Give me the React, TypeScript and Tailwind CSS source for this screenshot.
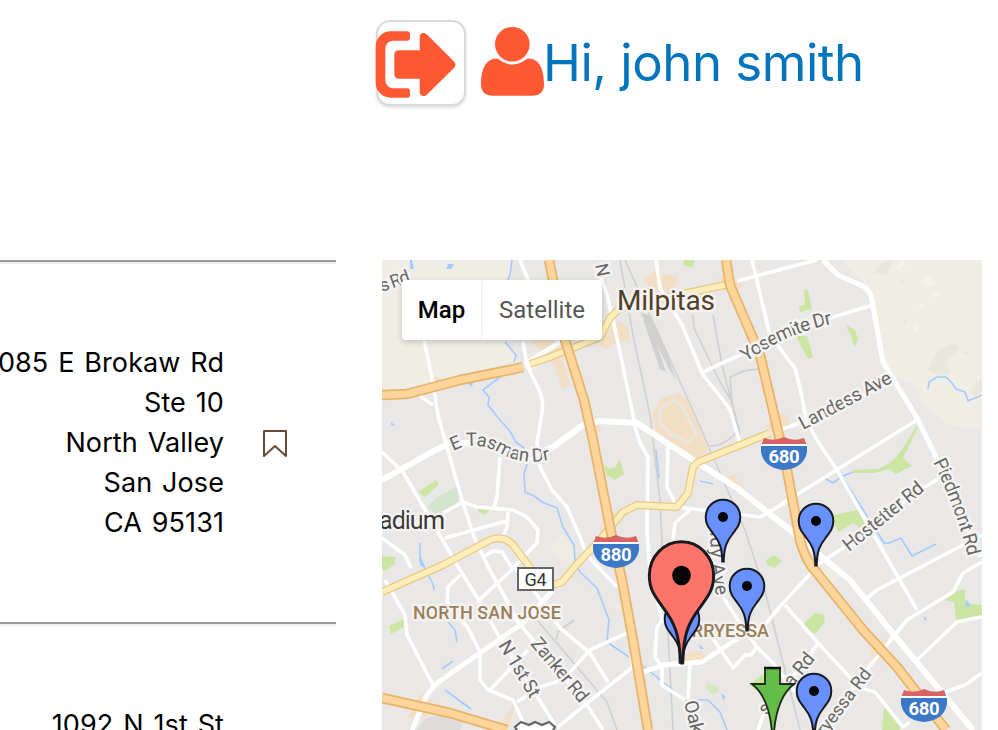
import React from "react";

const gray = [
  "M620 260L633 335L650 415L660 500L662 543L667 613L673 730",
  "M625 260L653 322L695 415L723 480L745 530L757 567L763 583L800 730",
  "M693 315L694 328L719 380L732 402L740 435",
  "M713 315L722 365L735 415L739 430Q725 446 710 446",
  "M732 402L730 377L744 371L758 369",
  "M537 620L607 702L617 730M556 640L558 632L574 620",
];

const minorRoads = [
  "M420 396L433 405M423 335L432 378L438 415L447 447L463 503L475 540L490 570",
  "M520 260L530 285M523 342L527 365L540 392Q544 403 542 412L537 443L540 467L552 490L567 507L580 537L587 555L617 587",
  "M382 452L403 472L460 570L480 602L498 635L538 698L555 725",
  "M443 513L463 502L477 507L513 510L527 517L538 530L537 543L513 568",
  "M500 457L497 497L494 508M508 512L507 527L503 537M445 538L503 522L507 522",
  "M483 557L493 551L502 552L512 568M382 538L405 555L411 568",
  "M385 580L405 615L407 635L433 685",
  "M460 575L448 587L447 602L468 628L480 652L480 680L488 690L513 700L523 722",
  "M517 565L477 602M487 565L500 588L518 622L587 705L603 730",
  "M513 565L537 595L560 628L590 653L608 682M490 690L528 650",
  "M627 633L590 650L563 680L540 687L517 702M557 728L587 703L633 667L631 655",
  "M598 270L607 295L617 338L633 415L635 427L640 443L648 457L647 533L650 570L662 620L657 627L655 657L662 667L662 685L685 700",
  "M656 260L660 288L682 325L703 375L723 400L730 410L740 443",
  "M703 372L740 355L830 318L873 305M737 281L790 267L817 260",
  "M752 260L762 302L770 335L790 362L795 368L800 388L807 422L817 440L837 470L867 523L917 610",
  "M780 430L800 423L893 382M780 505L917 420",
  "M763 627L783 603L820 563L843 548L923 488L940 478",
  "M867 598L877 590L982 535M982 562L963 573L953 592L907 620L893 637L877 657L820 730",
  "M982 617L957 622L917 660M982 673L965 685L945 692",
  "M785 605L818 643L860 688L875 692L903 727L910 722M818 643L807 660L765 710L758 730",
  "M723 597L740 623L757 647L773 663L795 692M712 637L733 668L745 655L751 655L757 647",
  "M690 663L688 700M668 447L667 487L677 507L760 517L790 500",
  "M690 510L675 523L673 540",
];

const arterials = [
  "M382 480L400 470L430 453L450 443L490 443L530 457L553 447L583 425L600 421L637 423L667 443L737 488L790 530L823 558L850 580L890 630L973 730",
  "M412 730L427 695L437 683L480 653L523 623L553 590",
  "M643 672L663 665L690 663L702 662L740 637L763 625",
  "M823 260L838 275L865 287L871 295L883 362L917 418L935 455L980 557",
  "M525 364L560 342M527 368L556 356",
];

const yellow = [
  "M530 364L550 357L580 345L600 337L610 318L620 308L687 293L730 284",
  "M382 592L443 565L490 540Q504 535 513 545L531 569",
  "M548 586L562 582L578 563L600 540L623 512L637 505L677 507L688 493L693 467L698 462L770 433",
];

const highways = [
  "M549 260L565 340L584 400L593 440L612 537L622 580L633 640L648 730",
  "M726 260L730 285L760 355L773 410L787 470L800 540Q806 562 817 573L863 630L897 667L946 730",
  "M382 395L407 394L460 380L510 370L523 367",
  "M382 698L450 713L507 730",
];

const water = [
  "M512 260L510 275L506 284M505 342L516 355L514 362M500 377L483 390L489 397L488 405L500 420L509 430L516 442L524 448L528 460L524 475L525 492L534 496L542 502L557 508L563 527L574 545L575 562L580 572L597 588L609 620L607 642L629 657",
  "M420 543L420 562L424 567L433 584L434 590M448 622L455 630L457 642M453 661L442 669M445 690L471 709",
  "M928 389L929 382L937 377L946 377L952 383L956 389L965 392L968 401L982 395",
  "M826 479L833 483L841 477L853 472M843 478L884 543L889 543L901 538L912 556L936 544",
  "M643 666L685 700L708 700L720 712L727 730M656 450L659 478M700 481L713 484",
];

const parks = [
  "M418 492L436 480L439 484L425 497Z",
  "M477 506L491 508L485 515L479 512Z",
  "M382 556L395 557V564L387 570H382Z",
  "M389 626L404 619V627L391 634Z",
  "M604 464L609 469L615 467L620 459L624 474L615 480L606 475Z",
  "M766 560L774 555L782 561L775 568L767 565Z",
  "M804 290L808 290L812 309L800 312L799 307L805 304Z",
  "M796 336H807L813 357L808 359Z",
  "M846 324L855 330L858 339L855 347Z",
  "M853 470L878 469L890 463L898 455Q907 443 916 426L918 427L903 458L912 466L896 474L889 469L875 473H853Z",
  "M834 515L858 510L866 524L860 528L853 523L839 532L832 521Z",
  "M805 622L815 613L824 615L825 622L815 634L804 626Z",
  "M944 600L959 590L965 590V603L982 605V615L956 620L954 602Z",
  "M884 707L900 727V730H882Z",
  "M749 684L765 673L770 682L755 690Z",
  "M683 260H695L692 268L684 265Z",
];

const sand = [
  "M531 340L548 336L560 349L570 385L562 388L555 367Z",
  "M643 280L653 272L678 276L675 290L655 293Z",
  "M600 345L608 330L619 321L629 328L630 340L613 345L607 349Z",
  "M718 281L727 270L742 284L734 296Z",
  "M652 415L662 398L678 393L688 400L708 450L697 461L677 446L658 438Z",
  "M766 427L779 412L790 419L783 440Z",
  "M599 538L603 517L620 509L624 514L610 535Z",
  "M727 478L734 474L744 488L738 491Z",
  "M796 540L805 548L801 551L797 548Z",
  "M869 652L877 642L889 638L886 653L875 662Z",
  "M683 655L700 651L708 657L700 663L682 662Z",
  "M410 710L421 693L432 701L428 716L410 719Z",
  "M432 376L442 379L432 391Z",
  "M595 421L602 429L594 438Z",
  "M498 730L512 706L517 700L512 716L507 730Z",
];

function Roads({ paths, color, width }: { paths: string[]; color: string; width: number }) {
  return (
    <g fill="none" stroke={color} strokeWidth={width} strokeLinejoin="round">
      {paths.map((d) => <path key={d} d={d} />)}
    </g>
  );
}

function Shield({ x, y, label }: { x: number; y: number; label: string }) {
  return (
    <g transform={`translate(${x} ${y})`}>
      <path d="M-20 -16Q-10 -12 0 -17Q10 -12 20 -16L23 -8H-23Z" fill="#d86364" />
      <path d="M-23 -9H23V-2Q20 14 0 16Q-20 14 -23 -2Z" fill="#3b78c7" />
      <path d="M-23 -9H23" stroke="white" strokeWidth="2" />
      <text x="0" y="8.5" textAnchor="middle" fontSize="18.5" fontWeight="700" fill="white" stroke="none" textLength="31">{label}</text>
    </g>
  );
}

function Pin({ x, y, big = false }: { x: number; y: number; big?: boolean }) {
  return (
    <g transform={`translate(${x} ${y}) ${big ? "scale(1.86 1.95)" : ""}`}>
      <path d="M-0.700 44.500C-0.900 30 -4 24 -9.500 17C-14.500 10.500 -17.300 7 -17.300 0A17.300 17.300 0 1 1 17.300 0C17.300 7 14.500 10.500 9.500 17C4 24 0.900 30 0.700 44.500Z" fill={big ? "#ff7468" : "#6991fd"} stroke="#171a22" strokeWidth={big ? 1.6 : 2} />
      <circle r="5" fill="#050505" />
    </g>
  );
}

function MapCanvas() {
  return (
    <svg className="block h-[470px] w-[600px]" viewBox="382 260 600 470" fontFamily="Roboto, sans-serif">
      <defs>
        <path id="tasman" d="M453 451Q474 439 502 454Q526 467 556 458" />
        <path id="yosemite" d="M746 362Q786 333 836 323" />
        <path id="piedmont" d="M933 462Q956 508 969 560" />
        <path id="lundy" d="M710 526L711 562Q712 580 718 602" />
      </defs>
      <rect x="382" y="260" width="600" height="470" fill="#e9e8e6" />
      <path d="M382 260H512L510 282L506 342L517 361L460 375L407 390H382Z" fill="#f0ede5" />
      <path d="M840 260L865 284L874 305L885 362L897 378L912 383L925 405L945 423L965 428L982 427V260Z" fill="#f0ede5" />
      <g fill="#e9e6de">
        <path d="M883 262L892 262L887 275L873 273Z" />
        <path d="M928 370L938 350L954 343L960 349L946 361L951 373L940 376Z" />
        <path d="M961 351L969 352L965 355ZM971 389L982 377V391L975 397Z" />
        <path d="M899 282L906 276L904 283ZM901 324L906 319L907 324Z" />
      </g>
      <g fill="#f5f2ea">
        <path d="M894 268L904 260L906 265L899 270ZM918 282L928 275L937 283L927 287Z" />
        <path d="M930 299L936 291L941 294ZM917 307L925 302L922 308ZM912 331L918 323V331Z" />
      </g>
      <path d="M427 507L436 498L458 486V504L449 509L440 517Z" fill="#d2e5cc" />
      <path d="M425 719L447 712L464 721L460 730H417Z" fill="#dddcdb" />
      <path d="M550 550L563 533L570 544L578 549L571 565ZM826 567L843 575L831 585L820 575Z" fill="#efece2" />
      <g fill="#f2dfc5">{sand.map((d) => <path key={d} d={d} />)}</g>
      <path d="M661 408L673 400L682 406L696 434L688 442L670 434L659 421Z" fill="none" stroke="#eae7e1" strokeWidth="3" />
      <g fill="#cbe6a3">{parks.map((d) => <path key={d} d={d} />)}</g>
      <path d="M707 682L717 686L719 692L713 695L705 688Z" fill="#d6e8c0" />
      <Roads paths={gray} color="#d0d0d0" width={1.6} />
      <path d="M640 312L651 316L666 349L676 380L668 367L657 345ZM643 319L651 327L666 372L660 369Z" fill="#d0d0d0" />
      <Roads paths={water} color="#a3ccff" width={1.6} />
      <g fill="#a3ccff">
        <path d="M410 260H412L414 269H410ZM448 264H454L451 269H446ZM391 422L396 426L391 425ZM468 384L473 382L472 387ZM420 555L425 566H420Z" />
        <path d="M966 599L971 606L965 607ZM923 616L927 619L925 621ZM699 644L704 649L700 649ZM721 693L726 697L723 700Z" />
      </g>
      <Roads paths={minorRoads} color="white" width={3.6} />
      <Roads paths={arterials} color="white" width={5} />
      <Roads paths={arterials.slice(0, 1)} color="white" width={6} />
      <Roads paths={yellow} color="#e6ca84" width={8} />
      <Roads paths={yellow} color="#ffeebb" width={5.5} />
      <Roads paths={highways} color="#e8b36a" width={10.5} />
      <Roads paths={highways} color="#ffd59b" width={7} />
      <g fill="#666" stroke="#f4f3f1" strokeWidth="5" strokeLinejoin="round" paintOrder="stroke" fontSize="19">
        <text transform="translate(382 292) rotate(-20)" fontSize="18" textLength="31">s Rd</text>
        <text transform="translate(595 265) rotate(78)" fontSize="18">N</text>
        <text x="617" y="310" fontSize="28" fill="#523f29" textLength="98">Milpitas</text>
        <text><textPath href="#yosemite" textLength="95">Yosemite Dr</textPath></text>
        <text transform="translate(803 430) rotate(-28)" textLength="102">Landess Ave</text>
        <text transform="translate(849 552) rotate(-39)" textLength="98">Hostetter Rd</text>
        <text><textPath href="#piedmont" textLength="101">Piedmont Rd</textPath></text>
        <text fontSize="18.500"><textPath href="#tasman" textLength="101">E Tasman Dr</textPath></text>
        <text x="379" y="529" fontSize="25.500" fill="#3b3936" textLength="66">adium</text>
        <text x="413" y="619" fontSize="18" fontWeight="500" fill="#987f59" textLength="148">NORTH SAN JOSE</text>
        <text x="769" y="637" fontSize="18" fontWeight="500" fill="#987f59" textAnchor="end">BERRYESSA</text>
        <text transform="translate(498 645) rotate(59)" textLength="63">N 1st St</text>
        <text transform="translate(530 644) rotate(50)" textLength="78">Zanker Rd</text>
        <text><textPath href="#lundy" textLength="71">ndy Ave</textPath></text>
        <text transform="translate(684 702) rotate(77)">Oakl</text>
        <text transform="translate(792 688) rotate(-51)">a Rd</text>
        <text transform="translate(767 716) rotate(-55)">s</text>
        <text transform="translate(872 674) rotate(-53)" textAnchor="end" fontSize="18">erryessa Rd</text>
      </g>
      <rect x="518" y="568" width="35" height="22" fill="white" stroke="#666" strokeWidth="2" />
      <text x="535.500" y="585.500" fontSize="18" textAnchor="middle" fill="#333" textLength="22">G4</text>
      <path d="M518 732L515 727L521 722L529 725L535 722L542 725L549 722L555 727L552 732Z" fill="white" stroke="#666" strokeWidth="2.200" />
      <Shield x={784} y={454} label="680" />
      <Shield x={616} y={552} label="880" />
      <Shield x={924} y={706} label="680" />
      <Pin x={723} y={517} />
      <Pin x={816} y={521} />
      <Pin x={747} y={586} />
      <Pin x={682} y={619} />
      <Pin x={681.5} y={575.5} big />
      <path d="M765 668H780V684H794Q777 697 774 732H772Q769 697 752 684H765Z" fill="#65bd49" stroke="#1d2b18" strokeWidth="1.800" />
      <path d="M764 668H781" stroke="#111" strokeWidth="2.500" />
      <Pin x={814} y={691} />
    </svg>
  );
}

function Listing({ lines, bookmark = false }: { lines: string[]; bookmark?: boolean }) {
  return (
    <article className="h-[362px] w-[336px] shrink-0">
      <div className="h-1 border-b-2 border-t-2 border-b-[#eeeeee] border-t-[#9a9a9a]" />
      <div className="flex items-center pt-[78px]">
        <address className="flex w-[224px] flex-col items-end whitespace-nowrap pt-px text-[27px] not-italic leading-[40px] tracking-[0.08px] text-black [word-spacing:2.2px]">
          {lines.map((line) => <span key={line}>{line}</span>)}
        </address>
        {bookmark && (
          <svg className="ml-[38px] h-7 w-[26px]" viewBox="0 0 26 28" fill="none" stroke="#684b39" strokeWidth="2" strokeLinejoin="round">
            <path d="M2 2H24V27L13 17L2 27Z" />
          </svg>
        )}
      </div>
    </article>
  );
}

export default function App() {
  return (
    <div className="h-[730px] w-[998px] overflow-hidden bg-white font-['Inter','Liberation_Sans',sans-serif]">
      <header className="flex h-[260px] items-start pl-[376px] pt-5">
        <button aria-label="Sign out" className="flex h-[86px] w-[90px] shrink-0 rounded-[14px] border-2 border-[#dadada] bg-white pt-[8px] shadow-[0_2px_3px_rgba(0,0,0,0.12)]">
          <svg className="-ml-[4px] h-[70px] w-[84px] shrink-0" viewBox="374 30 84 70" fill="#ff5934">
            <path d="M407 31.300H390.700A15 15 0 0 0 375.700 46.300V82.700A15 15 0 0 0 390.700 97.700H407Q410 97.700 410 94.500V91Q410 88.300 407 88.300H393.300A8 8 0 0 1 385.300 80.300V48.700A8 8 0 0 1 393.300 40.700H407Q410 40.700 410 38V34.500Q410 31.300 407 31.300Z" />
            <path d="M399 50.300H419.700V37C419.700 33 424 31.500 427 34.500L454 61.500Q457 64.700 454 68L427 94.500C424 97.500 419.700 96 419.700 92V78.700H399Q394.300 78.700 394.300 74V55Q394.300 50.300 399 50.300Z" />
          </svg>
        </button>
        <svg className="ml-[15px] mt-[6px] h-[70px] w-[63px] shrink-0" viewBox="481 26 63 70" fill="#ff5934">
          <circle cx="512.300" cy="44.200" r="17.300" />
          <path d="M497.700 58.600Q512.500 70.500 527.500 58.600C540 58 544 71 544 84Q544 95.700 532 95.700H493Q481 95.700 481 84C481 71 485 58 497.700 58.600Z" />
        </svg>
        <span className="-ml-px mt-[12px] whitespace-nowrap text-[51px] leading-[62px] tracking-[-0.5px] text-[#0075be]">Hi, john smith</span>
      </header>
      <main className="flex h-[470px] gap-[46px]">
        <section className="flex w-[336px] shrink-0 flex-col overflow-hidden">
          <Listing lines={["085 E Brokaw Rd", "Ste 10", "North Valley", "San Jose", "CA 95131"]} bookmark />
          <Listing lines={["1092 N 1st St"]} />
        </section>
        <section className="relative h-[470px] w-[600px] shrink-0 overflow-hidden">
          <MapCanvas />
          <div className="absolute left-5 top-5 flex h-[60px] w-[200px] overflow-hidden rounded-[4px] bg-white font-['Roboto',sans-serif] text-[24px] shadow-[0_2px_6px_rgba(0,0,0,0.2)]">
            <button className="w-20 border-r border-[#eeeeee] font-medium text-black">Map</button>
            <button className="w-[120px] text-[#565656]">Satellite</button>
          </div>
        </section>
      </main>
    </div>
  );
}
